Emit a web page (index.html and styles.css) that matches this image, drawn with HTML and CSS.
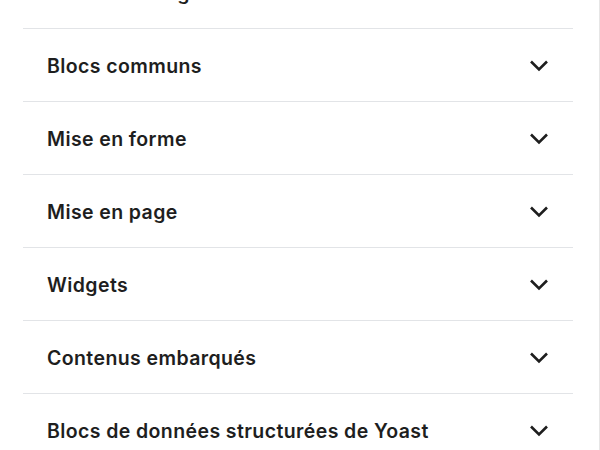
FILE: index.html
```html
<!DOCTYPE html>
<html lang="fr">
<head>
<meta charset="utf-8">
<link rel="stylesheet" href="styles.css">
</head>
<body>
<div class="panel">
  <ul class="list">
    <li class="row"><span class="label">Blocs de design</span><svg class="chev" viewBox="0 0 20 12"><polyline points="2,1.5 10,9.5 18,1.5"/></svg></li>
    <li class="row"><span class="label">Blocs communs</span><svg class="chev" viewBox="0 0 20 12"><polyline points="2,1.5 10,9.5 18,1.5"/></svg></li>
    <li class="row"><span class="label">Mise en forme</span><svg class="chev" viewBox="0 0 20 12"><polyline points="2,1.5 10,9.5 18,1.5"/></svg></li>
    <li class="row"><span class="label">Mise en page</span><svg class="chev" viewBox="0 0 20 12"><polyline points="2,1.5 10,9.5 18,1.5"/></svg></li>
    <li class="row"><span class="label">Widgets</span><svg class="chev" viewBox="0 0 20 12"><polyline points="2,1.5 10,9.5 18,1.5"/></svg></li>
    <li class="row"><span class="label">Contenus embarqués</span><svg class="chev" viewBox="0 0 20 12"><polyline points="2,1.5 10,9.5 18,1.5"/></svg></li>
    <li class="row"><span class="label">Blocs de données structurées de Yoast</span><svg class="chev" viewBox="0 0 20 12"><polyline points="2,1.5 10,9.5 18,1.5"/></svg></li>
  </ul>
</div>
</body>
</html>
```

FILE: styles.css
```css
html, body {
  margin: 0;
  padding: 0;
  background: #fff;
}
body {
  width: 600px;
  height: 450px;
  overflow: hidden;
}
.panel {
  height: 450px;
  box-sizing: border-box;
  border-right: 1px solid #e6e6e6;
  padding: 0 26px 0 23px;
  overflow: hidden;
}
.list {
  list-style: none;
  margin: -44px 0 0 0;
  padding: 0;
}
.row {
  box-sizing: border-box;
  height: 73px;
  border-bottom: 1px solid #e2e4e7;
  display: flex;
  align-items: center;
  justify-content: space-between;
  padding: 2px 24px 0 24px;
  font-family: Inter, "Noto Sans", sans-serif;
  font-weight: 600;
  font-size: 19.5px;
  color: #1e1e1e;
}
.label {
  letter-spacing: 0.4px;
}
.chev {
  width: 20px;
  height: 12px;
  fill: none;
  stroke: #1e1e1e;
  stroke-width: 2.6;
}
```
